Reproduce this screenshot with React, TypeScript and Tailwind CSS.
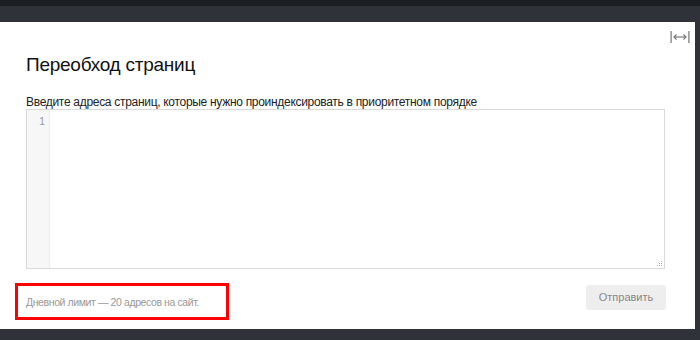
import React from "react";

export default function App() {
  return (
    <div className="w-[700px] h-[340px] bg-[#2f3339] flex flex-col overflow-hidden" style={{ fontFamily: '"Liberation Sans", Arial, sans-serif' }}>
      <div className="h-[6px] bg-[#1b1e22] shrink-0" />
      <div className="h-[16px] shrink-0" />
      <div className="flex">
        <div className="relative w-[695px] h-[307px] bg-white pl-[26px] pr-[29px] pt-[31px] flex flex-col">
          <svg className="absolute left-[670px] top-[9px]" width="20" height="12" viewBox="0 0 20 12">
            <rect x="0.5" y="0" width="1.2" height="12" fill="#777" />
            <rect x="18.3" y="0" width="1.2" height="12" fill="#777" />
            <path d="M4 6 H16" stroke="#777" strokeWidth="1.2" />
            <path d="M6.5 3.5 L4 6 L6.5 8.5" stroke="#777" strokeWidth="1.2" fill="none" />
            <path d="M13.5 3.5 L16 6 L13.5 8.5" stroke="#777" strokeWidth="1.2" fill="none" />
          </svg>
          <h1 className="text-[19px] leading-[24px] tracking-[-0.25px] text-[#111] font-normal">Переобход страниц</h1>
          <p className="mt-[18px] text-[12px] leading-[14px] tracking-[-0.3px] text-[#222]">
            Введите адреса страниц, которые нужно проиндексировать в приоритетном порядке
          </p>
          <div className="relative w-[639px] h-[160px] border border-[#d9d9d9] flex">
            <div className="w-[23px] bg-[#f7f7f7] border-r border-[#eeeeee] text-right pr-[4px] pt-[4px] text-[11px] leading-[14px] text-[#999]">
              1
            </div>
            <div className="flex-1" />
            <svg className="absolute right-[1px] bottom-[1px]" width="6" height="6" viewBox="0 0 6 6">
              <rect x="4" y="0" width="1" height="1" fill="#aaa" />
              <rect x="2" y="2" width="1" height="1" fill="#aaa" />
              <rect x="4" y="2" width="1" height="1" fill="#aaa" />
              <rect x="0" y="4" width="1" height="1" fill="#aaa" />
              <rect x="2" y="4" width="1" height="1" fill="#aaa" />
              <rect x="4" y="4" width="1" height="1" fill="#aaa" />
            </svg>
          </div>
          <div className="mt-[14px] flex justify-between items-start">
            <div className="-ml-[11px] w-[214px] h-[37px] border-[3px] border-[#ff0000] pl-[8px] pt-[10px] text-[10.5px] leading-[13px] tracking-[-0.4px] whitespace-nowrap text-[#999]">
              Дневной лимит — 20 адресов на сайт.
            </div>
            <button className="mt-[2px] w-[80px] h-[25px] bg-[#eeeeee] rounded-[3px] text-[11px] tracking-[0px] text-[#888]">
              Отправить
            </button>
          </div>
        </div>
        <div className="flex-1" />
      </div>
    </div>
  );
}
